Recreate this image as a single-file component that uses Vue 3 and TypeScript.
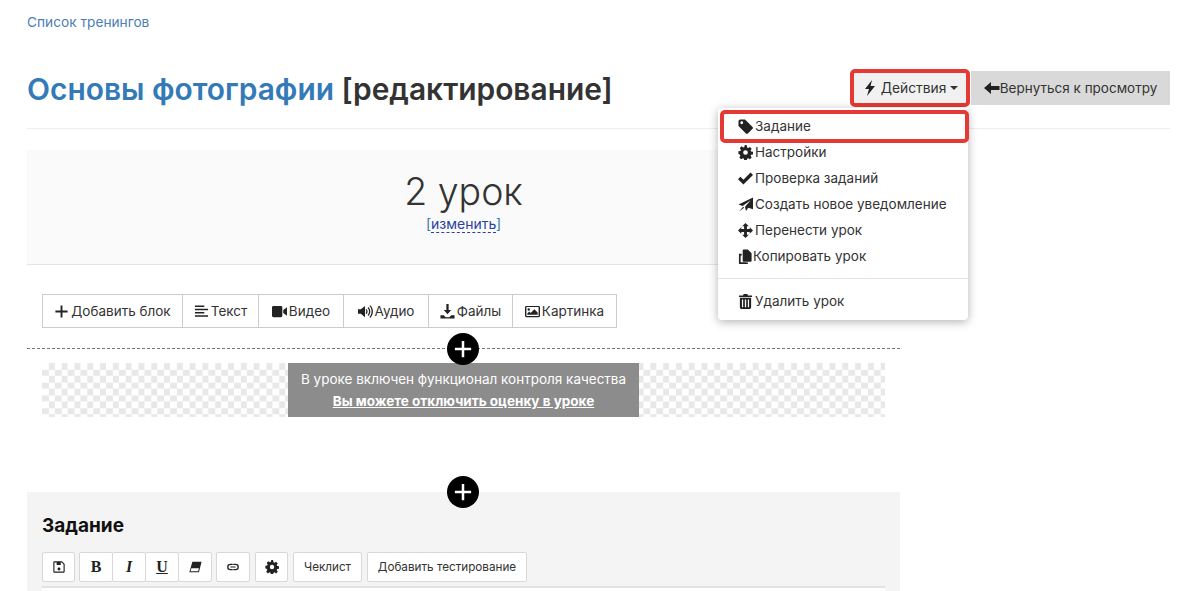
<script setup lang="ts">
interface Item { label: string; icon: string }

const icons: Record<string, string> = {
  tag: 'M0.500 2.500C0.500 1.400 1.400 .5 2.500 .5H7.500l8 8c.6.6.6 1.500 0 2l-5 5c-.6.6-1.500.6-2 0l-8-8V2.500zM4 2.500a1.500 1.500 0 1 0 0 3 1.500 1.500 0 0 0 0-3z',
  gear: 'M9.300 .5l.4 2.200c.4.1.8.3 1.100.5l1.900-1.200 1.900 1.900-1.200 1.900c.2.3.4.7.5 1.100l2.200.4v2.700l-2.200.4c-.1.4-.3.8-.5 1.100l1.200 1.900-1.900 1.900-1.900-1.200c-.3.2-.7.4-1.100.5l-.4 2.200H6.700l-.4-2.200c-.4-.1-.8-.3-1.100-.5l-1.900 1.200-1.900-1.900 1.200-1.900c-.2-.3-.4-.7-.5-1.100L.4 9.300V6.700l2.200-.4c.1-.4.3-.8.5-1.100L1.900 3.300l1.900-1.900 1.900 1.200c.3-.2.7-.4 1.100-.5l.4-2.200h2.100zM8 5.500a2.500 2.500 0 1 0 0 5 2.500 2.500 0 0 0 0-5z',
  check: 'M5.800 14.500 0 8.700l2.600-2.600 3.200 3.200 7.600-7.600L16 4.300 5.800 14.500z',
  plane: 'M16 .5V13l-5-1.500L8.500 15l-1-4.500 6-7-8.500 6-4.500-1.500L16 .5zM5.500 10.500l1 1-5.500 4 4.500-5z',
  move: 'M8 0l3.500 3.500h-2v3h3v-2L16 8l-3.500 3.500v-2h-3v3h2L8 16l-3.500-3.500h2v-3h-3v2L0 8l3.500-3.500v2h3v-3h-2L8 0z',
  copy: 'M5 1.500c0-.6.4-1 1-1h4.500l4 4v8c0 .6-.4 1-1 1H6c-.6 0-1-.4-1-1v-11zM1 5h3v1.800H2.800v7.400h6V14.300h1.800v1.200c0 .3-.2.5-.5.5H1.500c-.3 0-.5-.2-.5-.5V5z',
  trash: 'M6 0h4l.6 1.500H15v1.700H1V1.500h4.400L6 0zM2 4h12v10.500c0 .8-.7 1.500-1.500 1.500h-9C2.700 16 2 15.300 2 14.500V4zm2.200 1.800v8.400h1.300V5.800H4.200zm3.100 0v8.400h1.400V5.800H7.300zm3.200 0v8.400h1.300V5.800h-1.300z',
  plus: 'M7 1.500h2v5.500h5.500v2H9v5.500H7V9H1.500V7H7V1.500z',
  lines: 'M1 1.500h10v1.700H1zM1 5h14v1.700H1zM1 8.500h10v1.700H1zM1 12h14v1.700H1z',
  video: 'M0 3.500C0 2.700.7 2 1.500 2h8C10.300 2 11 2.700 11 3.500v9c0 .8-.7 1.500-1.500 1.500h-8C.7 14 0 13.300 0 12.500v-9zM12 6.500 16 3.500v9l-4-3v-3z',
  audio: 'M0 5.500h3L7.500 2v12L3 10.500H0v-5zM9 5.200c1.600 1.200 1.600 4.400 0 5.600l-.8-1c.8-.8.8-2.800 0-3.600l.8-1zM11 3.200c2.800 2.200 2.800 7.400 0 9.600l-.8-1c2-1.800 2-5.800 0-7.600l.8-1zM13 1.200c3.900 3.300 3.900 10.300 0 13.600l-.8-1c3-2.700 3-8.900 0-11.600l.8-1z',
  download: 'M6.800 0h2.400v6.500H12L8 11 4 6.500h2.800V0zM.5 12h3.500l2 2h4l2-2h3.500v3.500H.5V12z',
  image: 'M1.500 2h13c.8 0 1.500.7 1.500 1.500v9c0 .8-.7 1.500-1.500 1.500h-13C.7 14 0 13.300 0 12.500v-9C0 2.700.7 2 1.500 2zm0 1.300v9.400h13V3.300h-13zM4 4.500a1.300 1.300 0 1 1 0 2.600 1.300 1.300 0 0 1 0-2.600zM2.500 11.500V10l2-2 1.500 1.500L10 5.500l3.500 3.500v2.500h-11z',
  bolt: 'M10 0 3 9h4l-2 7 8-10H8.500L10 0z',
  back: 'M7 2v4h8.500v4H7v4L0 8l7-6z',
  save: 'M2.500 1.500h9l3 3v8.500c0 .8-.7 1.500-1.500 1.500H3c-.8 0-1.500-.7-1.500-1.500V3c0-.8.500-1.500 1-1.500zm.3 1.300v10.400h10.400V5.100l-2-2.300H10v3H5.300v-3H2.800zM8 8.500a1.700 1.700 0 1 1 0 3.400 1.700 1.700 0 0 1 0-3.400z',
  eraser: 'M5 2h10.500l-3 12H1.500L5 2zM3.800 9.500l-.9 3.300h8.700l.9-3.300H3.800z',
  link: 'M5 4.300h2.700v1.500H5a2.200 2.200 0 0 0 0 4.400h2.700v1.500H5a3.700 3.700 0 0 1 0-7.400zm3.300 0H11a3.700 3.700 0 0 1 0 7.400H8.300v-1.500H11a2.200 2.200 0 0 0 0-4.400H8.300V4.300zM5 7.300h6v1.400H5V7.300z',
}

const items: Item[] = [
  { label: 'Задание', icon: 'tag' },
  { label: 'Настройки', icon: 'gear' },
  { label: 'Проверка заданий', icon: 'check' },
  { label: 'Создать новое уведомление', icon: 'plane' },
  { label: 'Перенести урок', icon: 'move' },
  { label: 'Копировать урок', icon: 'copy' },
]

const blocks = [
  { label: 'Добавить блок', icon: 'plus' },
  { label: 'Текст', icon: 'lines' },
  { label: 'Видео', icon: 'video' },
  { label: 'Аудио', icon: 'audio' },
  { label: 'Файлы', icon: 'download' },
  { label: 'Картинка', icon: 'image' },
]
</script>

<template>
  <div class="page">
    <a class="crumb">Список тренингов</a>

    <header class="head">
      <h1 class="title"><a>Основы фотографии</a> [редактирование]</h1>
      <div class="actions">
        <div class="act-wrap">
          <button class="act">
            <svg class="ico bolt" viewBox="0 0 16 16"><path :d="icons.bolt" /></svg>
            <span>Действия</span><i class="caret"></i>
          </button>
          <div class="menu">
            <div v-for="(it, i) in items" :key="it.label" class="mi" :class="{ first: i === 0, tight: it.icon === 'copy' }">
              <svg class="ico" viewBox="0 0 16 16"><path :d="icons[it.icon]" fill-rule="evenodd" /></svg>
              <span>{{ it.label }}</span>
            </div>
            <div class="sep"></div>
            <div class="mi">
              <svg class="ico" viewBox="0 0 16 16"><path :d="icons.trash" fill-rule="evenodd" /></svg>
              <span>Удалить урок</span>
            </div>
          </div>
        </div>
        <button class="backbtn">
          <svg class="ico" viewBox="0 0 16 16"><path :d="icons.back" /></svg>
          <span>Вернуться к просмотру</span>
        </button>
      </div>
    </header>

    <main class="col">
      <section class="lesson">
        <div class="lname">2 урок</div>
        <div class="lchange">[<a>изменить</a>]</div>
      </section>

      <div class="blocks">
        <div v-for="b in blocks" :key="b.label" class="blk">
          <svg class="ico" viewBox="0 0 16 16"><path :d="icons[b.icon]" fill-rule="evenodd" /></svg>
          <span>{{ b.label }}</span>
        </div>
      </div>

      <div class="divider">
        <span class="add"><svg viewBox="0 0 16 16"><path :d="icons.plus" /></svg></span>
      </div>

      <div class="quality">
        <div class="qbox">
          <div>В уроке включен функционал контроля качества</div>
          <a>Вы можете отключить оценку в уроке</a>
        </div>
      </div>

      <section class="task">
        <span class="add"><svg viewBox="0 0 16 16"><path :d="icons.plus" /></svg></span>
        <h3 class="ttl">Задание</h3>
        <div class="tools">
          <div class="grp"><button class="tb"><svg viewBox="0 0 16 16"><path :d="icons.save" fill-rule="evenodd" /></svg></button></div>
          <div class="grp">
            <button class="tb serif b">B</button>
            <button class="tb serif it">I</button>
            <button class="tb serif u">U</button>
            <button class="tb"><svg viewBox="0 0 16 16"><path :d="icons.eraser" fill-rule="evenodd" /></svg></button>
          </div>
          <div class="grp"><button class="tb w34"><svg viewBox="0 0 16 16"><path :d="icons.link" fill-rule="evenodd" /></svg></button></div>
          <div class="grp gapped"><button class="tb"><svg viewBox="0 0 16 16"><path :d="icons.gear" fill-rule="evenodd" /></svg></button></div>
          <div class="grp gapped"><button class="tb txt w69">Чеклист</button></div>
          <div class="grp gapped"><button class="tb txt w160">Добавить тестирование</button></div>
        </div>
        <div class="editor"></div>
      </section>
    </main>
  </div>
</template>

<style>
html, body { margin: 0; background: #fff; overflow: hidden; }
</style>

<style scoped>
.page {
  height: 591px;
  overflow: hidden;
  box-sizing: border-box;
  padding: 0 30px 0 27px;
  font-family: Inter, "Noto Sans", sans-serif;
  font-size: 13.5px;
  color: #333;
}
.ico { width: 15px; height: 15px; fill: #222; flex: none; }
button { font-family: inherit; cursor: pointer; }
.crumb { display: block; padding-top: 14px; font-size: 13.700px; line-height: 16px; color: #4a80b5; }
.head {
  display: flex; align-items: center; justify-content: space-between;
  margin-top: 20px; height: 78px; border-bottom: 1px solid #eee;
}
.title { margin: 0; font-size: 29.900px; font-weight: 600; color: #333; line-height: 36px; }
.title a { color: #337ab7; }
.actions { display: flex; align-items: center; gap: 1px; position: relative; top: -1px; }
.act-wrap { position: relative; }
.act {
  width: 120px; height: 38px; box-sizing: border-box; border: 4px solid #e53935; border-radius: 5px;
  background: #f1f1f1; color: #333; font-size: 13.800px;
  display: flex; align-items: center; justify-content: center; gap: 4px; padding: 0;
}
.bolt { width: 16px; height: 16px; margin-right: -1px; }
.caret { width: 0; height: 0; border-left: 4px solid transparent; border-right: 4px solid transparent; border-top: 4px solid #333; }
.backbtn {
  height: 34px; width: 199px; box-sizing: border-box; border: 0; background: #d9d9d9; color: #333; font-size: 13.500px;
  display: flex; align-items: center; justify-content: center; gap: 0; padding: 0;
}
.backbtn .ico { width: 16px; height: 16px; }
.menu {
  position: absolute; z-index: 5; top: 39px; right: 2px; width: 250px; height: 212px; box-sizing: border-box;
  background: #fff; border-radius: 4px; box-shadow: 0 2px 10px rgba(0,0,0,.3);
  padding: 5px 0 0; font-size: 13.500px;
}
.mi { height: 26px; display: flex; align-items: center; gap: 2px; padding: 0 20px; box-sizing: border-box; white-space: nowrap; position: relative; }
.mi.tight { gap: 0; }
.mi.first::after {
  content: ""; position: absolute; left: 2px; right: -1px; top: -3px; bottom: -4px;
  border: 4px solid #e53935; border-radius: 5px;
}
.sep { height: 1px; background: #e5e5e5; margin: 9px 0; }
.col { width: 873px; }
.lesson {
  margin-top: 21px; height: 115px; box-sizing: border-box; background: #fafafa; border-bottom: 1px solid #e3e3e3;
  text-align: center; padding-top: 21px;
}
.lname { font-size: 37.500px; font-weight: 300; line-height: 42px; color: #333; }
.lchange { font-size: 14px; line-height: 18px; color: #337ab7; margin-top: 2px; }
.lchange a { color: #2a3fa0; border-bottom: 1px dashed #2a3fa0; }
.blocks {
  display: grid; grid-template-columns: 139px 76px 85px 85px 84px 104px;
  margin: 29px 0 0 15px; width: max-content; border: 1px solid #ccc; height: 34px; box-sizing: border-box;
}
.blk { display: flex; align-items: center; justify-content: center; gap: 2px; border-left: 1px solid #ccc; box-sizing: border-box; font-size: 13.500px; }
.blk:first-child { border-left: 0; }
.divider { margin-top: 20px; height: 0; border-top: 1px dashed #777; position: relative; }
.add {
  position: absolute; left: 420px; top: -16px; width: 32px; height: 32px; border-radius: 50%; background: #000;
  display: flex; align-items: center; justify-content: center; z-index: 2;
}
.add svg { width: 20px; height: 20px; fill: #fff; }
.quality {
  margin: 14px 15px 0; height: 54px; display: flex; justify-content: center;
  background-color: #fff;
  background-image: conic-gradient(#e8e8e8 25%, #fff 0 50%, #e8e8e8 0 75%, #fff 0);
  background-size: 12.800px 12.800px;
}
.qbox { width: 351px; background: #8c8c8c; color: #fff; text-align: center; font-size: 13.500px; line-height: 22px; padding-top: 5px; box-sizing: border-box; }
.qbox a { font-weight: 700; text-decoration: underline; }
.task { margin-top: 75px; background: #f4f4f4; height: 99px; position: relative; padding: 21px 15px 0; box-sizing: border-box; }
.ttl { margin: 0; font-size: 19px; font-weight: 700; color: #111; line-height: 26px; }
.tools { display: flex; gap: 4px; margin-top: 13px; }
.grp { display: flex; }
.grp.gapped { margin-left: 1px; }
.tb {
  height: 30px; width: 34px; background: #fff; border: 1px solid #d8d8d8; border-radius: 2px; margin-left: -1px; padding: 0; font-size: 11.700px; color: #333;
  display: flex; align-items: center; justify-content: center; box-sizing: border-box;
}
.grp .tb:first-child { margin-left: 0; }
.grp:nth-child(1) .tb, .grp:nth-child(4) .tb { width: 33px; }
.grp .tb.w34 { width: 34px; }
.tb svg { width: 14px; height: 14px; fill: #222; }
.serif { font-family: "Liberation Serif", serif; font-size: 16px; color: #222; }
.b { font-weight: 700; }
.it { font-style: italic; font-weight: 700; }
.u { text-decoration: underline; font-weight: 700; }
.tb.w69 { width: 69px; }
.tb.w160 { width: 160px; }
.editor { margin-top: 4px; height: 20px; background: #fff; border-top: 2px solid #e2e2e2; }
</style>
